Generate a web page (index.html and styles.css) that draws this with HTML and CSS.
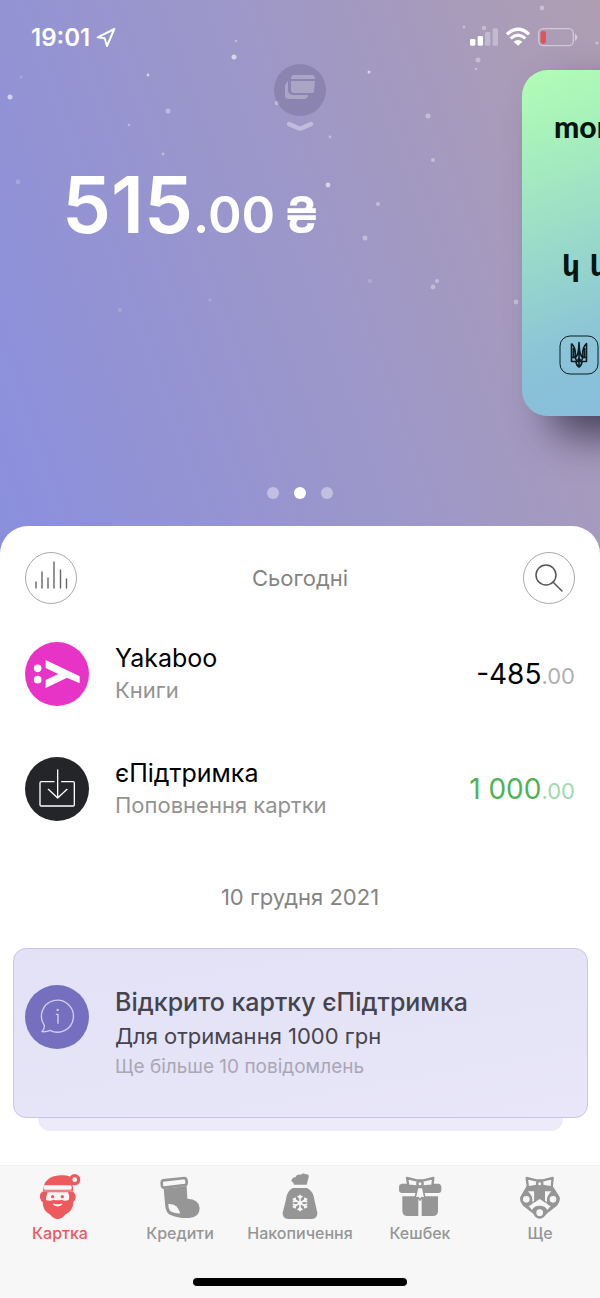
FILE: index.html
```html
<!DOCTYPE html>
<html lang="uk">
<head>
<meta charset="utf-8">
<meta name="viewport" content="width=device-width, initial-scale=1">
<title>monobank</title>
<link rel="stylesheet" href="styles.css">
</head>
<body>
<div class="app">
  <header class="hero">
    <svg class="stars" width="600" height="526" viewBox="0 0 600 526" fill="#fff" aria-hidden="true">
      <g opacity=".6"><circle cx="10" cy="97" r="2.5"/><circle cx="234" cy="57" r="2.5"/><circle cx="148" cy="75" r="1.4"/><circle cx="328" cy="185" r="2.4"/><circle cx="369" cy="72" r="1.5"/></g>
      <g opacity=".35"><circle cx="428" cy="116" r="2.5"/><circle cx="478" cy="60" r="2.5"/><circle cx="542" cy="8" r="2.4"/><circle cx="484" cy="28" r="2.2"/><circle cx="168" cy="111" r="2.5"/><circle cx="277" cy="103" r="2.3"/><circle cx="516" cy="302" r="2.4"/><circle cx="365" cy="238" r="2.5"/><circle cx="378" cy="204" r="2"/><circle cx="433" cy="160" r="2"/><circle cx="433" cy="287" r="2.4"/><circle cx="437" cy="281" r="2"/><circle cx="163" cy="154" r="1.5"/><circle cx="129" cy="125" r="1.3"/><circle cx="236" cy="41" r="1.3"/><circle cx="330" cy="137" r="1.4"/><circle cx="476" cy="69" r="1.3"/><circle cx="464" cy="27" r="1.4"/><circle cx="597" cy="43" r="1.6"/></g>
      <g opacity=".18"><circle cx="18" cy="182" r="2.4"/><circle cx="21" cy="77" r="1.5"/><circle cx="120" cy="310" r="2"/><circle cx="210" cy="300" r="1.6"/><circle cx="370" cy="281" r="2"/></g>
    </svg>

    <div class="status">
      <div class="status-left">
        <span>19:01</span>
        <svg width="20" height="20" viewBox="292 80 60 60" fill="none" stroke="#fff" stroke-width="6" stroke-linejoin="round" aria-hidden="true"><path d="M297 111L347 86L325 137L318 114Z"/></svg>
      </div>
      <div class="status-right">
        <svg width="28" height="20" viewBox="510 80 84 60" fill="#fff" aria-hidden="true"><rect x="510" y="116" width="16" height="20" rx="4"/><rect x="533" y="107" width="16" height="29" rx="4"/><g opacity=".3"><rect x="555" y="95" width="16" height="41" rx="4"/><rect x="578" y="84" width="16" height="52" rx="4"/></g></svg>
        <svg width="24" height="20" viewBox="618 80 72 60" fill="none" stroke="#fff" aria-hidden="true"><path d="M621 102Q654 72 687 102" stroke-width="10"/><path d="M632 114Q654 95 676 114" stroke-width="9"/><path d="M641 124Q654 114 667 124L654 136Z" fill="#fff" stroke="none"/></svg>
        <svg width="40" height="20" viewBox="714 80 120 60" fill="none" aria-hidden="true"><rect x="716" y="85" width="104" height="51" rx="14" stroke="#fff" stroke-opacity=".45" stroke-width="4"/><rect x="722" y="92" width="16" height="38" rx="7" fill="#e35257"/><path d="M825 100Q832 105 832 111Q832 117 825 122Z" fill="#fff" fill-opacity=".5"/></svg>
      </div>
    </div>

    <button class="cards-toggle" type="button" aria-label="Мої картки">
      <svg width="52" height="68" viewBox="0 0 52 68" aria-hidden="true"><circle cx="26" cy="26" r="26" fill="#7c759f" fill-opacity=".55"/><g fill="#fff" fill-opacity=".27"><path d="M20 11H38Q41 11 41 15H17Q17 11 20 11Z"/><path d="M17 17H41L40 27Q40 29 37 29H20Q17 29 17 26Z"/><path d="M14 17V27Q15 31 20 31H34Q34 35 30 35H15Q11 35 11 32V21Z"/></g><path d="M15 60L24 64Q26 65 28 64L37 60" fill="none" stroke="#fff" stroke-opacity=".35" stroke-width="4.500" stroke-linecap="round"/></svg>
    </button>

    <div class="track">
      <section class="slide">
        <h1 class="balance">515<span class="balance-cents">.00&#8201;₴</span></h1>
      </section>
      <section class="bank-card">
        <div class="bank-name">monobank</div>
        <div class="bank-digits">կ կ կ</div>
        <svg class="trident" width="40" height="40" viewBox="0 0 40 40" fill="none" stroke="#0b1d22" aria-hidden="true"><rect x="1" y="1" width="38" height="38" rx="10"/><path stroke-width="1.6" stroke-linejoin="round" d="M12.500 8.500V26.500H17Q17 30 20 32Q23 30 23 26.500H27.500V8.500Q23.500 12 23.500 20L24 22.500Q20.500 22 20 7.500Q19.500 22 16 22.500L16.500 20Q16.500 12 12.500 8.500M20 8V32M12.500 22.500H16L18 26.500L20 23L22 26.500L24 22.500H27.500M17 26.500H23M14.500 13V22M25.500 13V22"/></svg>
      </section>
    </div>

    <div class="dots" aria-hidden="true"><i class="dot"></i><i class="dot dot-active"></i><i class="dot"></i></div>
  </header>

  <main class="sheet">
    <div class="sheet-head">
      <button class="round" type="button" aria-label="Статистика"><svg width="34" height="34" viewBox="0 0 34 34" fill="none" stroke="#666" stroke-width="1.400" stroke-linecap="round" aria-hidden="true"><path d="M2 21V27M8 11V27M14 17V27M20 1V27M26.500 9V27M32.500 18V27"/></svg></button>
      <h2 class="day">Сьогодні</h2>
      <button class="round" type="button" aria-label="Пошук"><svg width="30" height="30" viewBox="0 0 30 30" fill="none" stroke="#555" stroke-width="1.500" stroke-linecap="round" aria-hidden="true"><circle cx="12" cy="12" r="10"/><path d="M19 19L28 28"/></svg></button>
    </div>

    <ul class="list">
      <li class="row">
        <svg class="avatar" width="64" height="64" viewBox="77 64 192 192" aria-hidden="true"><circle cx="173" cy="160" r="96" fill="#e834c6"/><g fill="#fff"><circle cx="115" cy="143" r="11.500"/><circle cx="115" cy="177" r="11.500"/><path d="M139 118L241 167V188L203 171L139 202V178L177 160L139 142Z"/></g></svg>
        <div class="info"><h3 class="title">Yakaboo</h3><p class="sub">Книги</p></div>
        <p class="amount">-485<span class="cents">.00</span></p>
      </li>
      <li class="row">
        <svg class="avatar" width="64" height="64" viewBox="77 410 192 192" aria-hidden="true"><circle cx="173" cy="506" r="96" fill="#242529"/><g fill="none" stroke="#fff" stroke-width="4" stroke-linejoin="round" stroke-linecap="round"><path d="M164 484H126Q122 484 122 488V553Q122 557 126 557H221Q225 557 225 553V488Q225 484 221 484H187M175 449V533M147 507L175 533L203 507"/></g></svg>
        <div class="info"><h3 class="title">єПідтримка</h3><p class="sub">Поповнення картки</p></div>
        <p class="amount amount-in">1 000<span class="cents">.00</span></p>
      </li>
    </ul>

    <h2 class="day">10 грудня 2021</h2>

    <section class="notice-stack">
      <article class="notice">
        <svg class="avatar" width="64" height="64" viewBox="77 171 192 192" aria-hidden="true"><circle cx="173" cy="267" r="96" fill="#756fc0"/><g fill="none" stroke="#d3cff5" stroke-width="4" stroke-linejoin="round" stroke-linecap="round"><path d="M135 292A48 48 0 1 1 152 307Q142 312 128 311Q136 302 135 292Z"/><path d="M171 259H176V286"/></g><circle cx="175" cy="246" r="3.500" fill="#d3cff5"/></svg>
        <div class="info">
          <h3 class="notice-title">Відкрито картку єПідтримка</h3>
          <p class="notice-text">Для отримання 1000 грн</p>
          <p class="notice-more">Ще більше 10 повідомлень</p>
        </div>
      </article>
    </section>
  </main>

  <nav class="nav">
    <div class="tabs">
      <a class="tab tab-active" href="#card" aria-current="page">
        <svg width="44" height="48" viewBox="116 66 132 144" fill="currentColor" aria-hidden="true"><path d="M131 124Q120 130 122 143Q124 153 130 156Q130 183 153 194Q163 207 175 207Q187 207 197 194Q222 183 222 156Q229 152 229 142Q229 130 220 124Z"/><path d="M131 122Q134 78 183 76Q200 75 210 79Q220 96 222 122Z"/><rect x="133" y="106" width="84" height="13" rx="4" fill="#f7f7f7"/><path d="M145 127H206Q212 140 208 150Q195 155 187 149Q175 153 163 149Q152 155 140 150Q139 140 145 127Z" fill="#f7f7f7"/><circle cx="160" cy="140" r="5"/><circle cx="189" cy="140" r="5"/><path d="M163 163Q175 172 187 163Q175 167 163 163Z" fill="#f7f7f7" stroke="#f7f7f7" stroke-width="4" stroke-linejoin="round"/><circle cx="226" cy="89" r="12" fill="#f7f7f7" stroke="currentColor" stroke-width="10"/></svg>
        <span>Картка</span>
      </a>
      <a class="tab" href="#credits">
        <svg width="44" height="48" viewBox="472 66 132 144" fill="currentColor" aria-hidden="true"><path d="M489 116L558 108L560 146Q596 148 597 174Q597 201 566 204Q535 206 508 194Q496 187 494 170Z"/><path d="M487 91L552 84Q556 84 557 90L558 98Q558 104 553 105L490 113Q485 113 484 108L483 98Q483 92 487 91Z" fill="#f7f7f7" stroke="currentColor" stroke-width="8"/><path d="M503 162Q530 160 539 190Q520 191 509 184Q502 175 503 162Z" fill="#f7f7f7"/></svg>
        <span>Кредити</span>
      </a>
      <a class="tab" href="#savings">
        <svg width="44" height="48" viewBox="143 66 132 144" fill="currentColor" aria-hidden="true"><path d="M191 104Q190 96 183 94Q184 83 195 82Q199 71 211 74Q219 68 226 73Q237 71 235 82L229 104Z"/><path d="M187 114H230Q250 123 253 153L261 188Q262 206 244 207H174Q156 206 157 188L166 153Q169 123 187 114Z"/><path fill="none" stroke="#f7f7f7" stroke-width="5" d="M209 134V184M187.500 146.500L230.500 171.500M187.500 171.500L230.500 146.500M202 138L209 145L216 138M202 180L209 173L216 180M187 155L196 153L194 143M231 155L222 153L224 143M187 163L196 165L194 175M231 163L222 165L224 175"/></svg>
        <span>Накопичення</span>
      </a>
      <a class="tab" href="#cashback">
        <svg width="44" height="48" viewBox="503 66 132 144" fill="currentColor" aria-hidden="true"><path d="M513 101H626Q633 103 633 111V120Q633 128 625 129H515Q506 128 506 120V111Q506 103 513 101Z"/><path d="M516 139H564V198H532Q516 198 516 182ZM574 139H623V182Q623 198 607 198H574Z"/><path d="M562 112L554 145L564 143L569 150L574 143L584 145L577 112Z" fill="#f7f7f7" stroke="currentColor" stroke-width="5" stroke-linejoin="round"/><path d="M530 84L559 91H580L609 84L606 107L580 109H559L534 107Z" fill="#f7f7f7" stroke="currentColor" stroke-width="7" stroke-linejoin="round"/><circle cx="569" cy="101" r="8" fill="#f7f7f7" stroke="currentColor" stroke-width="7"/></svg>
        <span>Кешбек</span>
      </a>
      <a class="tab" href="#more">
        <svg width="44" height="48" viewBox="354 66 132 144" fill="currentColor" aria-hidden="true"><path d="M380 108L363 137Q355 149 369 167L398 190Q420 218 442 190L471 167Q485 149 477 137L458 108Z"/><path d="M384 124H403V152L397 156Q398 138 384 124ZM454 124H435V152L441 156Q440 138 454 124ZM398 160L419 147L440 160Q444 168 452 168L442 180Q436 167 419 167Q402 167 396 180L386 168Q394 168 398 160Z" fill="#f7f7f7"/><g fill="#f7f7f7" stroke="currentColor" stroke-width="8"><circle cx="379" cy="148" r="14"/><circle cx="459" cy="148" r="14"/><circle cx="419" cy="188" r="14"/><path d="M380 84L409 91H429L458 84L455 112L429 108H409L384 112Z" stroke-width="7" stroke-linejoin="round"/></g><path d="M403 108H435V158L419 145L403 158Z"/><circle cx="419" cy="101" r="8" fill="#f7f7f7" stroke="currentColor" stroke-width="7"/></svg>
        <span>Ще</span>
      </a>
    </div>
    <div class="home-bar"></div>
  </nav>
</div>
</body>
</html>
```
FILE: styles.css
```css
* { box-sizing: border-box; }

body,
h1,
h2,
h3,
p,
ul {
  margin: 0;
  padding: 0;
  font-weight: 400;
}

body {
  font-family: Inter, "Liberation Sans", sans-serif;
  background: #fff;
  color: #000;
}

button {
  padding: 0;
  border: 0;
  background: none;
  font: inherit;
}

svg { display: block; flex: none; }

.app {
  display: flex;
  flex-direction: column;
  min-height: 100vh;
}

.hero {
  position: relative;
  overflow: hidden;
  padding-bottom: 56px;
  background: linear-gradient(70deg, #8a8fde 0%, #9c97ca 50%, #af9eb2 100%);
  color: #fff;
}

.stars {
  position: absolute;
  top: 0;
  left: 0;
}

.status {
  position: relative;
  display: flex;
  justify-content: space-between;
  align-items: center;
  height: 70px;
  padding: 4px 22px 0 31px;
}

.status-left,
.status-right {
  display: flex;
  align-items: center;
}

.status-left {
  gap: 6px;
  font-size: 24px;
  font-weight: 600;
}

.status-right { gap: 8px; }

.cards-toggle {
  position: absolute;
  z-index: 1;
  top: 64px;
  left: 50%;
  transform: translateX(-50%);
}

.track {
  position: relative;
  display: flex;
}

.slide {
  flex: 0 0 87%;
  padding: 90px 0 0 62px;
}

.balance {
  font-size: 78px;
  line-height: 90px;
  font-weight: 600;
  white-space: nowrap;
}

.balance-cents { font-size: 51px; }

.bank-card {
  flex: 0 0 90%;
  height: 346px;
  padding: 39px 32px;
  border-radius: 26px;
  background: linear-gradient(160deg, #b2fdb6 0%, #a9f3ba 12%, #8ac2d8 56%, #86b5e0 100%);
  box-shadow: 28px 20px 40px rgba(40, 35, 60, .75);
  color: #06150f;
}

.bank-name {
  font-family: Lato, sans-serif;
  font-size: 30px;
  line-height: 34px;
  font-weight: 900;
}

.bank-digits {
  margin: 106px 0 0 8px;
  font-family: "DejaVu Sans", sans-serif;
  font-size: 28px;
  line-height: 36px;
  font-weight: 700;
}

.trident { margin: 50px 0 0 5px; }

.dots {
  position: relative;
  display: flex;
  justify-content: center;
  gap: 15px;
  padding-top: 71px;
}

.dot {
  width: 12px;
  height: 12px;
  border-radius: 50%;
  background: rgba(255, 255, 255, .4);
}

.dot-active { background: #fff; }

.sheet {
  position: relative;
  flex: 1;
  margin-top: -29px;
  padding-bottom: 34px;
  border-radius: 28px 28px 0 0;
  background: #fff;
}

.sheet-head {
  display: flex;
  justify-content: space-between;
  align-items: center;
  padding: 26px 25px 0;
}

.round {
  display: grid;
  place-items: center;
  width: 52px;
  height: 52px;
  border: 1px solid #aaa;
  border-radius: 50%;
}

.day {
  color: #848484;
  font-size: 22px;
  line-height: 30px;
  text-align: center;
}

.list {
  padding: 12px 0 36px;
  list-style: none;
}

.row {
  display: flex;
  align-items: center;
  gap: 26px;
  height: 115px;
  padding: 0 25px;
}

.info {
  flex: 1;
  min-width: 0;
}

.title {
  font-size: 25px;
  line-height: 32px;
}

.sub {
  color: #939393;
  font-size: 22px;
  line-height: 32px;
}

.amount {
  font-size: 28px;
  white-space: nowrap;
}

.cents {
  color: #b0b0b0;
  font-size: 22px;
}

.amount-in { color: #4fb257; }

.amount-in .cents { color: #a2d9b1; }

.notice-stack { padding: 36px 12px 0 13px; }

.notice {
  display: flex;
  gap: 26px;
  padding: 36px 11px;
  border: 1px solid #c9c4e8;
  border-radius: 13px;
  background: linear-gradient(170deg, #e3e1f5, #e8e6f8);
}

.notice-stack::after {
  content: "";
  display: block;
  height: 13px;
  margin: 0 25px;
  border-radius: 0 0 12px 12px;
  background: #edebf9;
}

.notice-title {
  color: #45444e;
  font-size: 25px;
  line-height: 34px;
  font-weight: 500;
}

.notice-text {
  color: #45444e;
  font-size: 22px;
  line-height: 34px;
}

.notice-more {
  color: #a9a7b6;
  font-size: 19px;
  line-height: 28px;
}

.nav {
  height: 133px;
  padding-top: 6px;
  border-top: 1px solid #f0f0f0;
  background: #f7f7f7;
}

.tabs {
  display: grid;
  grid-template-columns: repeat(5, 1fr);
}

.tab {
  display: flex;
  flex-direction: column;
  align-items: center;
  gap: 3px;
  color: #969696;
  font-size: 16px;
  line-height: 20px;
  font-weight: 500;
  text-decoration: none;
}

.tab-active { color: #ec5a5d; }

.home-bar {
  width: 214px;
  height: 8px;
  margin: 35px auto 0;
  border-radius: 4px;
  background: #000;
}
```
